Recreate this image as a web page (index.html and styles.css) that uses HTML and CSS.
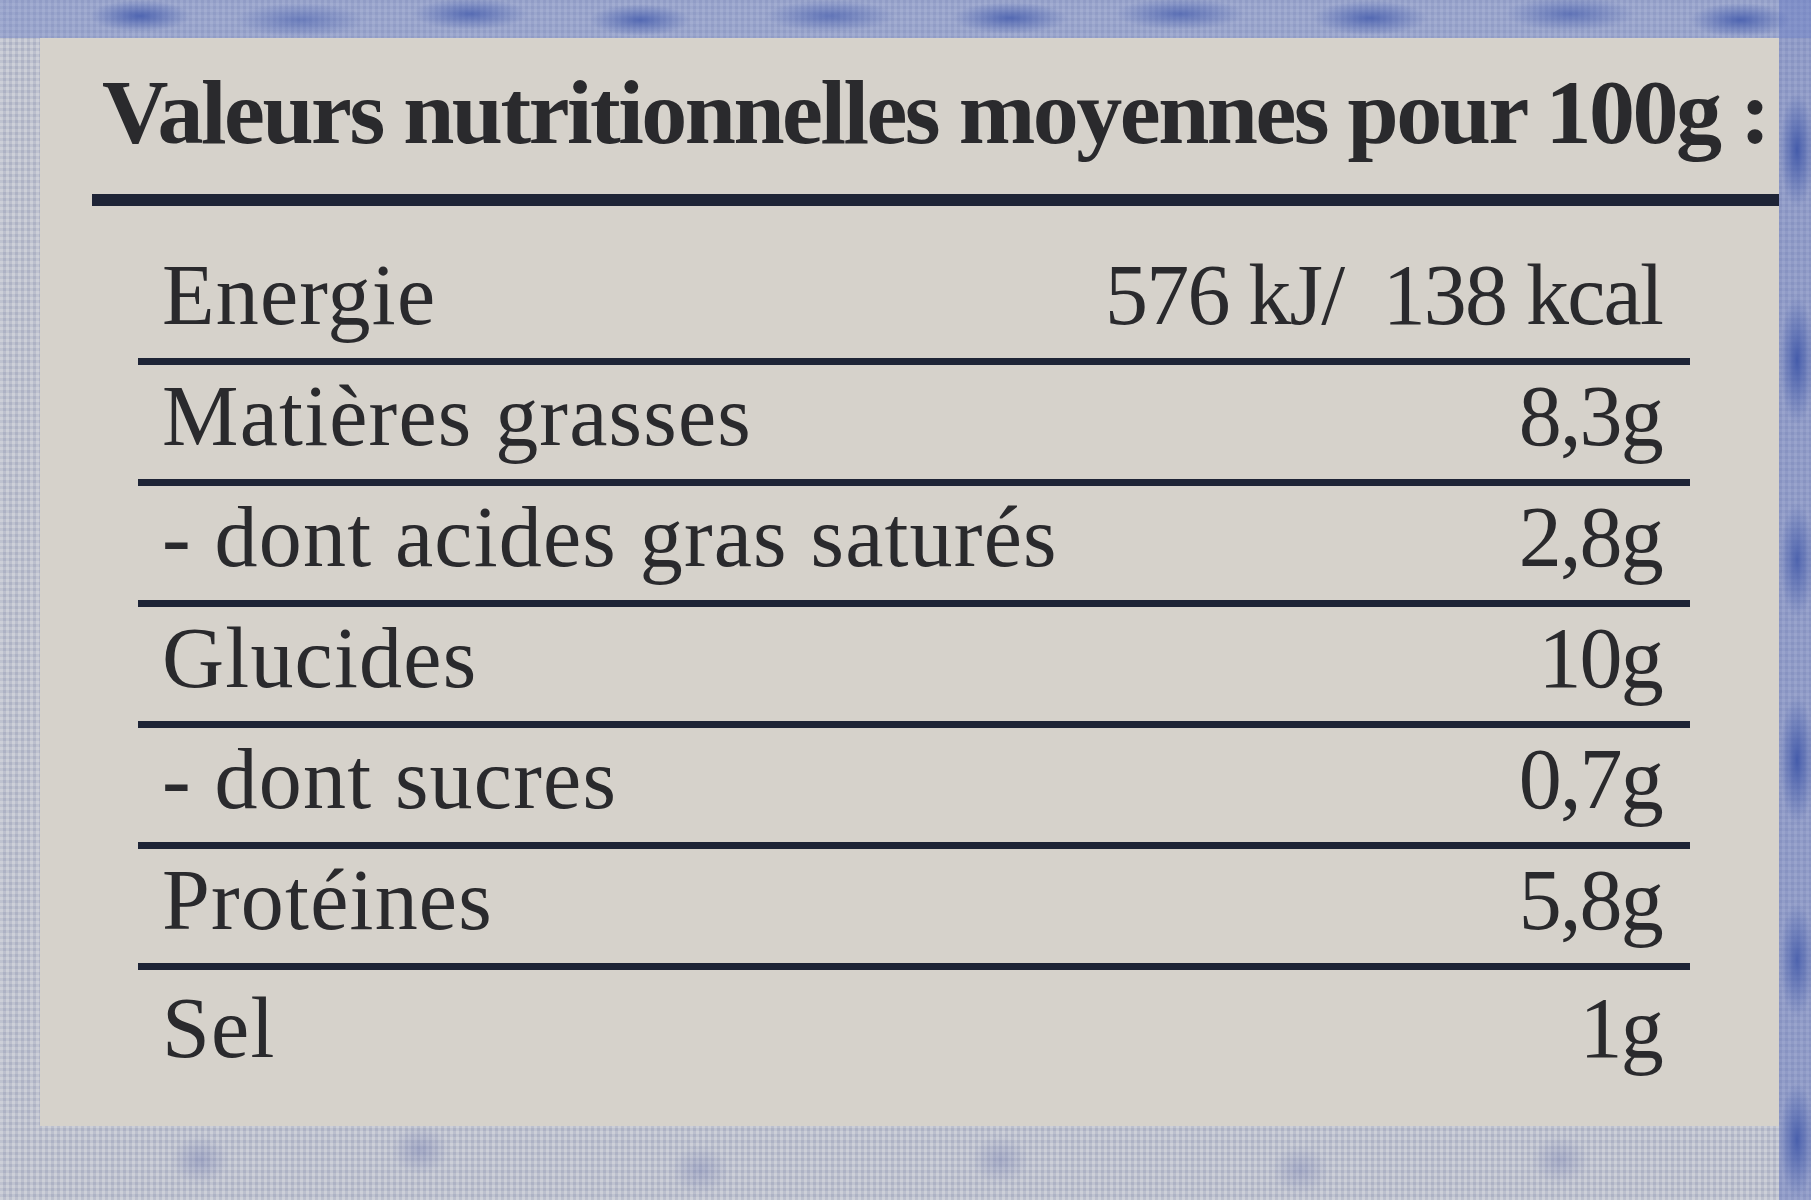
FILE: index.html
```html
<!DOCTYPE html>
<html lang="fr">
<head>
<meta charset="utf-8">
<title>Valeurs nutritionnelles</title>
<link rel="stylesheet" href="styles.css">
</head>
<body>
<div class="frame">
  <section class="panel">
    <h1 class="title">Valeurs nutritionnelles moyennes pour 100g :</h1>
    <div class="rule"></div>
    <div class="table">
      <div class="row first"><span class="label">Energie</span><span class="value">576 kJ/&nbsp; 138 kcal</span></div>
      <div class="row"><span class="label">Matières grasses</span><span class="value">8,3g</span></div>
      <div class="row"><span class="label">- dont acides gras saturés</span><span class="value">2,8g</span></div>
      <div class="row"><span class="label">Glucides</span><span class="value">10g</span></div>
      <div class="row"><span class="label">- dont sucres</span><span class="value">0,7g</span></div>
      <div class="row"><span class="label">Protéines</span><span class="value">5,8g</span></div>
      <div class="row last"><span class="label">Sel</span><span class="value">1g</span></div>
    </div>
  </section>
</div>
</body>
</html>
```
FILE: styles.css
```css
html, body {
  margin: 0;
  padding: 0;
}
body {
  width: 1811px;
  height: 1200px;
  overflow: hidden;
  background: #b6bacb;
}
.frame {
  box-sizing: border-box;
  width: 1811px;
  height: 1200px;
  padding: 38px 32px 74px 40px;
  background:
    radial-gradient(ellipse 70px 22px at 140px 16px, rgba(60,85,170,.8), transparent 72%),
    radial-gradient(ellipse 90px 24px at 300px 20px, rgba(60,85,170,.5), transparent 72%),
    radial-gradient(ellipse 80px 22px at 470px 14px, rgba(60,85,170,.7), transparent 72%),
    radial-gradient(ellipse 70px 22px at 640px 20px, rgba(60,85,170,.75), transparent 72%),
    radial-gradient(ellipse 90px 22px at 830px 16px, rgba(60,85,170,.6), transparent 72%),
    radial-gradient(ellipse 80px 22px at 1010px 18px, rgba(60,85,170,.75), transparent 72%),
    radial-gradient(ellipse 90px 22px at 1180px 14px, rgba(60,85,170,.65), transparent 72%),
    radial-gradient(ellipse 80px 24px at 1370px 18px, rgba(60,85,170,.75), transparent 72%),
    radial-gradient(ellipse 90px 24px at 1570px 14px, rgba(60,85,170,.6), transparent 72%),
    radial-gradient(ellipse 70px 24px at 1740px 20px, rgba(60,85,170,.8), transparent 72%),
    radial-gradient(ellipse 24px 80px at 1797px 150px, rgba(55,80,165,.85), transparent 72%),
    radial-gradient(ellipse 24px 90px at 1797px 360px, rgba(55,80,165,.85), transparent 72%),
    radial-gradient(ellipse 24px 80px at 1797px 560px, rgba(55,80,165,.75), transparent 72%),
    radial-gradient(ellipse 24px 90px at 1797px 760px, rgba(55,80,165,.85), transparent 72%),
    radial-gradient(ellipse 24px 80px at 1797px 960px, rgba(55,80,165,.75), transparent 72%),
    radial-gradient(ellipse 24px 80px at 1797px 1140px, rgba(55,80,165,.8), transparent 72%),
    radial-gradient(ellipse 40px 34px at 200px 1160px, rgba(100,110,170,.35), transparent 72%),
    radial-gradient(ellipse 40px 34px at 420px 1150px, rgba(100,110,170,.35), transparent 72%),
    radial-gradient(ellipse 40px 34px at 700px 1170px, rgba(100,110,170,.3), transparent 72%),
    radial-gradient(ellipse 40px 34px at 1000px 1160px, rgba(100,110,170,.3), transparent 72%),
    radial-gradient(ellipse 40px 34px at 1300px 1170px, rgba(100,110,170,.3), transparent 72%),
    radial-gradient(ellipse 40px 34px at 1560px 1160px, rgba(100,110,170,.3), transparent 72%),
    linear-gradient(180deg, rgba(110,130,200,.45) 0 38px, transparent 38px),
    linear-gradient(270deg, rgba(90,110,190,.45) 0 32px, transparent 32px),
    repeating-linear-gradient(90deg, rgba(255,255,255,.14) 0 3px, rgba(80,95,150,.08) 3px 6px),
    repeating-linear-gradient(0deg, rgba(255,255,255,.12) 0 3px, rgba(80,95,150,.07) 3px 6px),
    #bdc0cc;
}
.panel {
  box-sizing: border-box;
  height: 1088px;
  background: #d6d2cb;
  padding-top: 1px;
  font-family: "Liberation Serif", "DejaVu Serif", serif;
  color: #2a2a2d;
}
.title {
  margin: 0 0 0 62px;
  height: 155px;
  box-sizing: border-box;
  padding-top: 27px;
  font-size: 92px;
  line-height: 92px;
  font-weight: bold;
  letter-spacing: -2.5px;
  white-space: nowrap;
}
.rule {
  height: 12px;
  margin-left: 52px;
  background: #1e2436;
}
.table {
  margin-left: 98px;
  width: 1552px;
}
.row {
  display: flex;
  justify-content: space-between;
  align-items: flex-end;
  box-sizing: border-box;
  height: 121px;
  padding: 0 28px 20px 24px;
  border-bottom: 7px solid #1e2436;
  font-size: 86px;
  line-height: 86px;
  letter-spacing: 1.2px;
  white-space: nowrap;
}
.row.first {
  height: 159px;
}
.row.last {
  border-bottom: none;
  height: 114px;
  padding-bottom: 13px;
}
.value {
  letter-spacing: -1.8px;
}
```
